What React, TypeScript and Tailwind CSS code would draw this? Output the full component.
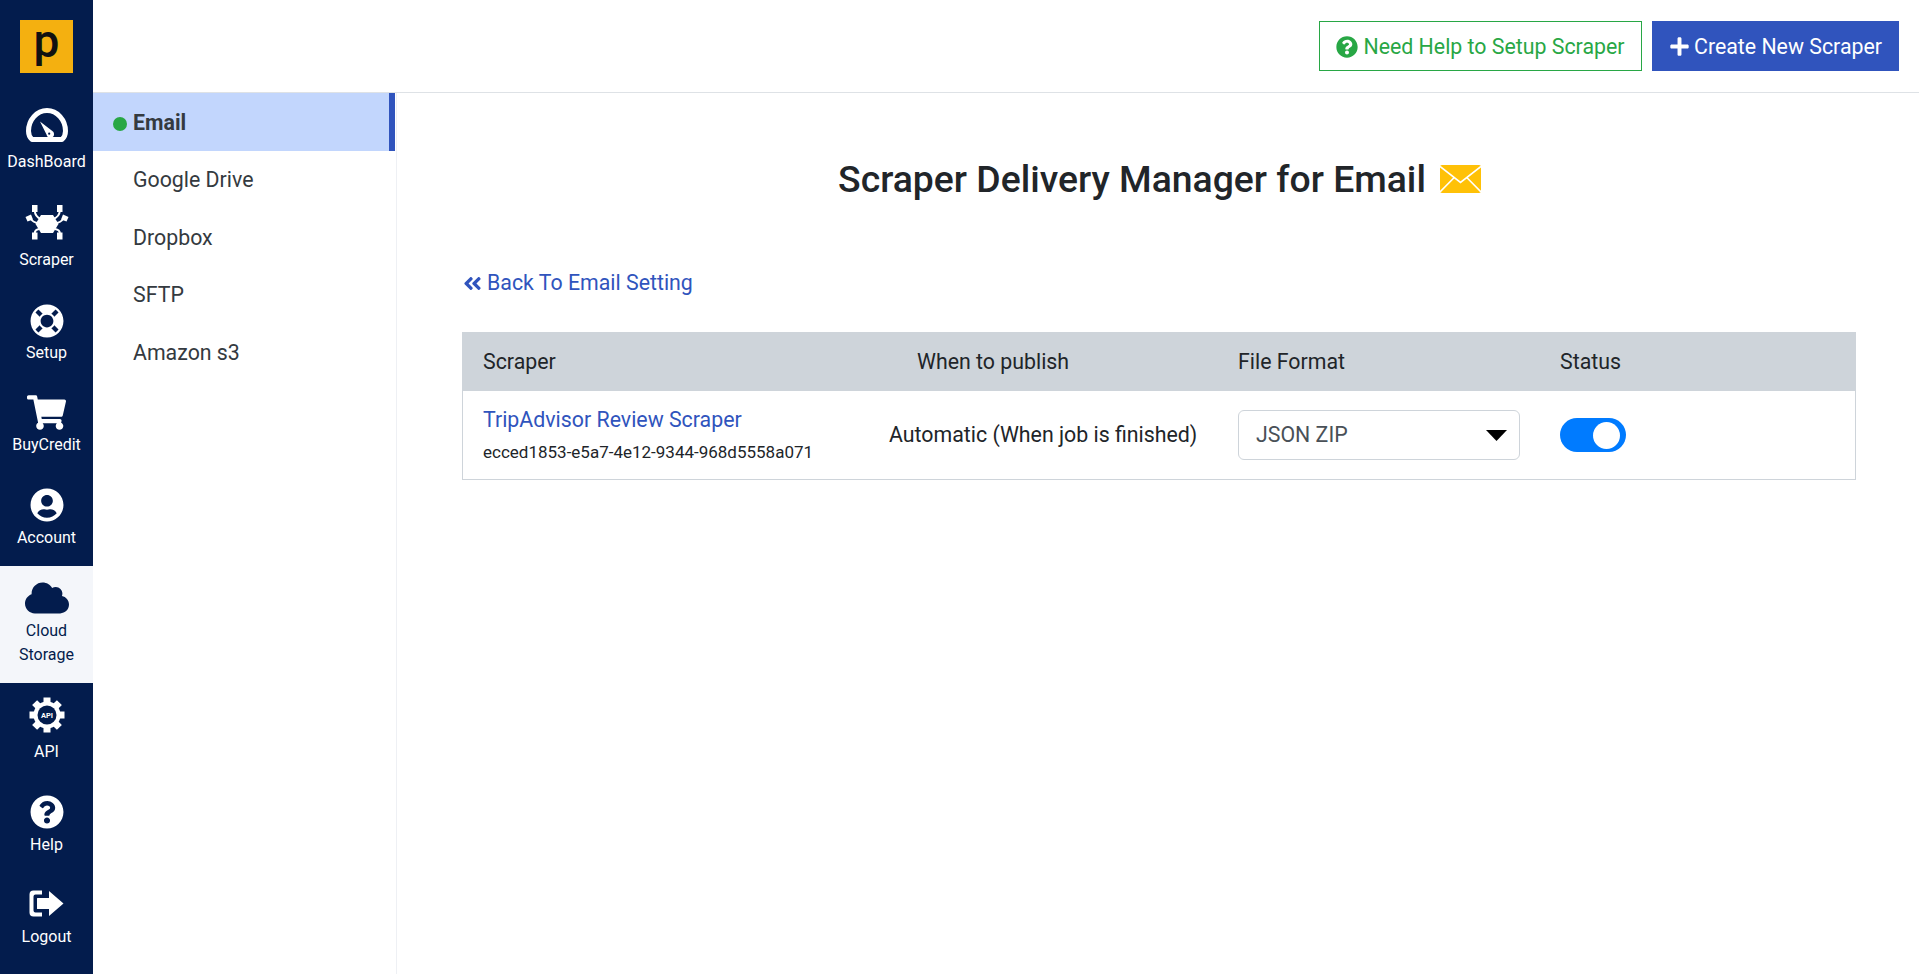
import React from "react";
import { FaLifeRing, FaShoppingCart, FaUserCircle, FaCloud, FaQuestionCircle, FaPlus, FaAngleDoubleLeft } from "react-icons/fa";

const NAVY = "#031c4d";

function Gauge() {
  return (
    <svg width="42" height="34" viewBox="0 0 42 34" fill="none">
      <path d="M6 31.500 C3.800 29.500 2.500 26.500 2.500 23 C2.500 11.800 10.800 2.500 21 2.500 C31.200 2.500 39.500 11.800 39.500 23 C39.500 26.500 38.200 29.500 36 31.500 Z" stroke="white" strokeWidth="5" strokeLinejoin="round" />
      <path d="M14 13.500 L26 22.800 A3.800 3.800 0 1 1 20.500 26.500 Z" fill="white" />
      <circle cx="23.200" cy="25.700" r="1.100" fill={NAVY} />
    </svg>
  );
}

function Spider() {
  return (
    <svg width="44" height="36" viewBox="0 0 44 36" fill="white">
      <path d="M16 10 H28 L33.500 19 L28 28 H16 L10.500 19 Z" />
      <rect x="7" y="0" width="5.500" height="7" />
      <rect x="32" y="0" width="5.500" height="7" />
      <rect x="7" y="27.500" width="5.500" height="7" />
      <rect x="32" y="27.500" width="5.500" height="7" />
      <path d="M0.500 12 L6 9.500 L8 14.500 L2.500 16.500 Z" />
      <path d="M43.500 12 L38 9.500 L36 14.500 L41.500 16.500 Z" />
      <g stroke="white" strokeWidth="2" fill="none">
        <path d="M9.800 6 C10 10 12 12.500 16 14" />
        <path d="M34.800 6 C34.500 10 32.500 12.500 28 14" />
        <path d="M5 13 C8 17 10 18 13 18" />
        <path d="M39 13 C36 17 34 18 31 18" />
        <path d="M9.800 28 C9.800 26 11.500 24.500 14 24" />
        <path d="M34.800 28 C34.800 26 33 24.500 30 24" />
      </g>
    </svg>
  );
}

function ApiGear() {
  const teeth = [0, 45, 90, 135, 180, 225, 270, 315];
  return (
    <svg width="36" height="36" viewBox="0 0 36 36">
      {teeth.map((a) => (
        <rect key={a} x="14.500" y="0.500" width="7" height="7" fill="white" transform={`rotate(${a} 18 18)`} />
      ))}
      <circle cx="18" cy="18" r="13.500" fill="white" />
      <circle cx="18" cy="18" r="9.500" fill={NAVY} />
      <text x="18" y="20.800" textAnchor="middle" fill="white" fontSize="7.500" fontWeight="700" fontFamily="Roboto, sans-serif">API</text>
    </svg>
  );
}

function Logout() {
  return (
    <svg width="35" height="27" viewBox="0 0 35 27" fill="white">
      <path d="M4.500 0.500 H13 V4.500 H6.500 Q4.500 4.500 4.500 6.500 V20.500 Q4.500 22.500 6.500 22.500 H13 V26.500 H4.500 Q0.500 26.500 0.500 22.500 V4.500 Q0.500 0.500 4.500 0.500 Z" />
      <path d="M8.500 8 H20 V1 L34.500 13.500 L20 26 V19 H8.500 Q8 19 8 18.500 V8.500 Q8 8 8.500 8 Z" />
    </svg>
  );
}

function Envelope() {
  return (
    <svg width="41" height="28" viewBox="0 0 41 28">
      <rect width="41" height="28" rx="2" fill="#ffc107" />
      <path d="M0 1.500 L20.500 17.500 L41 1.500 M0 27 L14 12.800 M41 27 L27 12.800" stroke="white" strokeWidth="1.600" fill="none" />
    </svg>
  );
}

const items = [
  { label: ["DashBoard"], icon: <Gauge />, cls: "h-[97px] pt-[16px]", iconCls: "h-[34px] mb-[8px]" },
  { label: ["Scraper"], icon: <Spider />, cls: "h-[98px] pt-[16px]", iconCls: "h-[36px] mb-[7px]" },
  { label: ["Setup"], icon: <FaLifeRing size={34} />, cls: "h-[92px] pt-[16px]", iconCls: "h-[35px] mb-[3px]" },
  { label: ["BuyCredit"], icon: <FaShoppingCart size={39} />, cls: "h-[93px] pt-[16px]", iconCls: "h-[35px] mb-[3px]" },
  { label: ["Account"], icon: <FaUserCircle size={34} />, cls: "h-[94px] pt-[16px]", iconCls: "h-[34px] mb-[4px]" },
  { label: ["Cloud", "Storage"], icon: <FaCloud size={44} />, cls: "h-[117px] pt-[16px] bg-[#f4f6fa] text-[#031c4d]", iconCls: "h-[31px] mb-[6px]" },
  { label: ["API"], icon: <ApiGear />, cls: "h-[96px] pt-[14px]", iconCls: "h-[35px] mb-[8px]" },
  { label: ["Help"], icon: <FaQuestionCircle size={34} />, cls: "h-[95px] pt-[16px]", iconCls: "h-[34px] mb-[4px]" },
  { label: ["Logout"], icon: <Logout />, cls: "h-[100px] pt-[16px]", iconCls: "h-[27px] mb-[8px]" },
];

const deliveries = ["Google Drive", "Dropbox", "SFTP", "Amazon s3"];

export default function App() {
  return (
    <div className="flex h-[974px] w-[1919px] overflow-hidden bg-white font-['Roboto',sans-serif] text-[21.330px] text-[#212529]">
      <aside className="flex w-[93px] shrink-0 flex-col bg-[#031c4d] text-white">
        <div className="flex h-[92px] shrink-0 items-start justify-center pt-[20px]">
          <div className="flex h-[53px] w-[53px] items-center justify-center bg-[#f4b010] pb-[12px] text-[46px] font-medium leading-none text-[#111]">
            p
          </div>
        </div>
        {items.map((it) => (
          <div key={it.label[0]} className={`flex shrink-0 flex-col items-center ${it.cls}`}>
            <div className={`flex items-center justify-center ${it.iconCls}`}>{it.icon}</div>
            {it.label.map((l) => (
              <span key={l} className="text-[16px] leading-[24px]">{l}</span>
            ))}
          </div>
        ))}
      </aside>

      <div className="flex min-w-0 flex-1 flex-col">
        <header className="flex h-[93px] shrink-0 items-start justify-end gap-[10px] border-b border-[#dee2e6] pr-[20px] pt-[21px]">
          <button className="flex h-[50px] w-[323px] items-center justify-center gap-[5px] border border-[#28a745] pt-[1px] text-[#28a745]">
            <FaQuestionCircle size={22} />
            <span>Need Help to Setup Scraper</span>
          </button>
          <button className="flex h-[50px] w-[247px] items-center justify-center gap-[4px] bg-[#3054bd] pt-[1px] text-white">
            <FaPlus size={21} />
            <span>Create New Scraper</span>
          </button>
        </header>

        <div className="flex min-h-0 flex-1">
          <nav className="w-[304px] shrink-0 border-r border-[#eef0f4] pr-[1px] text-[#343a40]">
            <div className="flex h-[58px] items-center border-r-[6px] border-[#3054bd] bg-[#c2d6fd] pl-[20px] pt-[1px] font-bold">
              <span className="mr-[6px] mt-[2px] h-[14px] w-[14px] rounded-full bg-[#28a745]" />
              <span>Email</span>
            </div>
            {deliveries.map((d) => (
              <div key={d} className="flex h-[57.500px] items-center pl-[40px] pt-[1px]">{d}</div>
            ))}
          </nav>

          <main className="min-w-0 flex-1 pl-[65px] pr-[63px]">
            <h1 className="mt-[61px] flex items-center justify-center gap-[14px] pl-[1px] text-[37.330px] font-medium leading-[50px] text-[#212529]">
              <span>Scraper Delivery Manager for Email</span>
              <Envelope />
            </h1>
            <a className="mt-[64px] flex items-center gap-[4px] leading-[30px] text-[#3054bd]">
              <FaAngleDoubleLeft size={21} />
              <span>Back To Email Setting</span>
            </a>
            <div className="mt-[34px] border border-t-0 border-[#ced4da]">
              <div className="-mx-[1px] grid h-[59px] grid-cols-[406px_349px_322px_1fr] items-center bg-[#ced4da] pl-[21px]">
                <span>Scraper</span>
                <span className="pl-[28px]">When to publish</span>
                <span>File Format</span>
                <span>Status</span>
              </div>
              <div className="grid h-[88px] grid-cols-[406px_349px_322px_1fr] items-center pl-[20px]">
                <div className="flex flex-col">
                  <a className="leading-[28px] text-[#3054bd]">TripAdvisor Review Scraper</a>
                  <span className="mt-[6px] text-[17px] leading-[24px]">ecced1853-e5a7-4e12-9344-968d5558a071</span>
                </div>
                <span>Automatic (When job is finished)</span>
                <div className="flex h-[50px] w-[282px] items-center justify-between rounded-[6px] border border-[#ced4da] pl-[17px] pr-[12px] text-[#495057]">
                  <span>JSON ZIP</span>
                  <svg width="21" height="11" viewBox="0 0 21 11"><path d="M0 0 H21 L10.500 11 Z" fill="black" /></svg>
                </div>
                <div className="flex h-[34px] w-[66px] items-center justify-end rounded-full bg-[#007bff] pr-[6px]">
                  <span className="h-[27px] w-[27px] rounded-full bg-white" />
                </div>
              </div>
            </div>
          </main>
        </div>
      </div>
    </div>
  );
}
